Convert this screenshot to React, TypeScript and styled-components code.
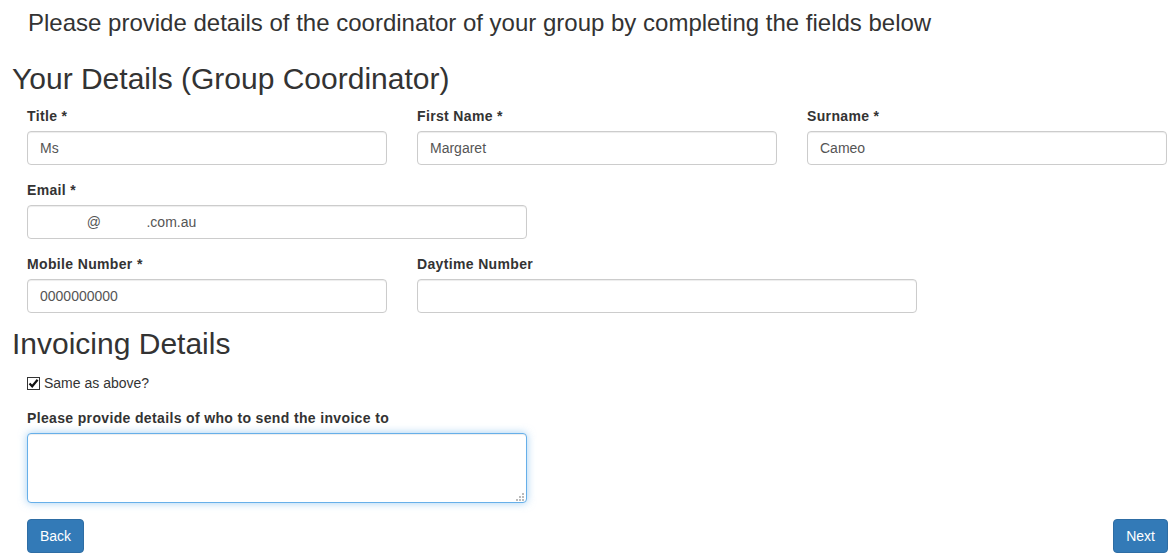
import React from "react";
import styled, { createGlobalStyle } from "styled-components";

const GlobalStyle = createGlobalStyle`
  body {
    margin: 0;
    background: #fff;
    font-family: "Liberation Sans", Arial, Helvetica, sans-serif;
    font-size: 14px;
    color: #333;
  }
  * {
    box-sizing: border-box;
  }
`;

const Page = styled.div`
  width: 1174px;
  padding: 10px 0 0 12px;
`;

const Intro = styled.p`
  margin: 0 0 0 16px;
  font-size: 24px;
  line-height: 26px;
  font-weight: 400;
`;

const SectionTitle = styled.h2<{ $top: number }>`
  margin: ${(p) => p.$top}px 0 0;
  font-size: 30px;
  line-height: 33px;
  font-weight: 400;
`;

const Fields = styled.div`
  display: grid;
  grid-template-columns: repeat(3, 360px);
  column-gap: 30px;
  row-gap: 15px;
  padding-left: 15px;
  margin-top: 11px;
`;

const Group = styled.div`
  display: flex;
  flex-direction: column;
`;

const Label = styled.label`
  display: block;
  font-weight: 700;
  font-size: 14px;
  line-height: 20px;
  letter-spacing: 0.35px;
  margin-bottom: 5px;
`;

const Input = styled.input<{ $wide?: boolean }>`
  width: ${(p) => (p.$wide ? "500px" : "360px")};
  height: 34px;
  padding: 6px 12px;
  font-family: inherit;
  font-size: 14px;
  color: #555;
  background: #fff;
  border: 1px solid #ccc;
  border-radius: 4px;
  box-shadow: inset 0 1px 1px rgba(0, 0, 0, 0.075);
  outline: none;
`;

const RowBreak = styled.div`
  grid-column: 2 / 4;
`;

const Invoicing = styled.div`
  padding-left: 15px;
  margin-top: 13px;
`;

const CheckRow = styled.label`
  display: flex;
  align-items: center;
  gap: 4px;
  font-size: 14px;
  line-height: 20px;
  font-weight: 400;
  cursor: pointer;
`;

const CheckBox = styled.span`
  display: inline-flex;
  align-items: center;
  justify-content: center;
  width: 13px;
  height: 13px;
  margin-top: 1px;
  border: 1px solid #333;
  background: #fff;
`;

const HiddenInput = styled.input`
  position: absolute;
  opacity: 0;
  width: 0;
  height: 0;
`;

const InvoiceGroup = styled.div`
  margin-top: 15px;
`;

const AreaWrap = styled.div`
  position: relative;
  width: 500px;
`;

const TextArea = styled.textarea`
  display: block;
  width: 500px;
  height: 70px;
  padding: 6px 12px;
  font-family: inherit;
  font-size: 14px;
  color: #555;
  border: 1px solid #66afe9;
  border-radius: 4px;
  outline: none;
  resize: none;
  box-shadow: inset 0 1px 1px rgba(0, 0, 0, 0.075),
    0 0 8px rgba(102, 175, 233, 0.6);
`;

const Grip = styled.svg`
  position: absolute;
  right: 3px;
  bottom: 2px;
  pointer-events: none;
`;

const Footer = styled.div`
  display: flex;
  justify-content: space-between;
  padding: 0 6px 0 15px;
  margin-top: 16px;
`;

const Button = styled.button`
  height: 34px;
  padding: 6px 12px;
  font-family: inherit;
  font-size: 14px;
  line-height: 20px;
  color: #fff;
  background-color: #337ab7;
  border: 1px solid #2e6da4;
  border-radius: 4px;
  cursor: pointer;

  &:hover {
    background-color: #286090;
  }
`;

const emailValue = " ".repeat(12) + "@" + " ".repeat(11) + "\u2009.com.au";

const gripDots = [
  [6, 0],
  [3, 3],
  [6, 3],
  [0, 6],
  [3, 6],
  [6, 6],
];

const App = () => {
  return (
    <>
      <GlobalStyle />
      <Page>
        <Intro>
          Please provide details of the coordinator of your group by completing
          the fields below
        </Intro>

        <SectionTitle $top={26}>Your Details (Group Coordinator)</SectionTitle>
        <Fields>
          <Group>
            <Label>Title *</Label>
            <Input defaultValue="Ms" />
          </Group>
          <Group>
            <Label>First Name *</Label>
            <Input defaultValue="Margaret" />
          </Group>
          <Group>
            <Label>Surname *</Label>
            <Input defaultValue="Cameo" />
          </Group>

          <Group>
            <Label>Email *</Label>
            <Input $wide defaultValue={emailValue} />
          </Group>
          <RowBreak />

          <Group>
            <Label>Mobile Number *</Label>
            <Input defaultValue="0000000000" />
          </Group>
          <Group>
            <Label>Daytime Number</Label>
            <Input $wide />
          </Group>
        </Fields>

        <SectionTitle $top={14}>Invoicing Details</SectionTitle>
        <Invoicing>
          <CheckRow>
            <HiddenInput type="checkbox" defaultChecked />
            <CheckBox>
              <svg width="11" height="11" viewBox="0 0 11 11">
                <path
                  d="M1.5 5.5 L4.2 8.3 L9.6 1.8"
                  fill="none"
                  stroke="#111"
                  strokeWidth="2.2"
                />
              </svg>
            </CheckBox>
            Same as above?
          </CheckRow>

          <InvoiceGroup>
            <Label>Please provide details of who to send the invoice to</Label>
            <AreaWrap>
              <TextArea />
              <Grip width="8" height="8" viewBox="0 0 8 8">
                {gripDots.map(([x, y]) => (
                  <rect key={`${x}-${y}`} x={x} y={y} width="2" height="2" fill="#bbb" />
                ))}
              </Grip>
            </AreaWrap>
          </InvoiceGroup>
        </Invoicing>

        <Footer>
          <Button>Back</Button>
          <Button>Next</Button>
        </Footer>
      </Page>
    </>
  );
};

export default App;
